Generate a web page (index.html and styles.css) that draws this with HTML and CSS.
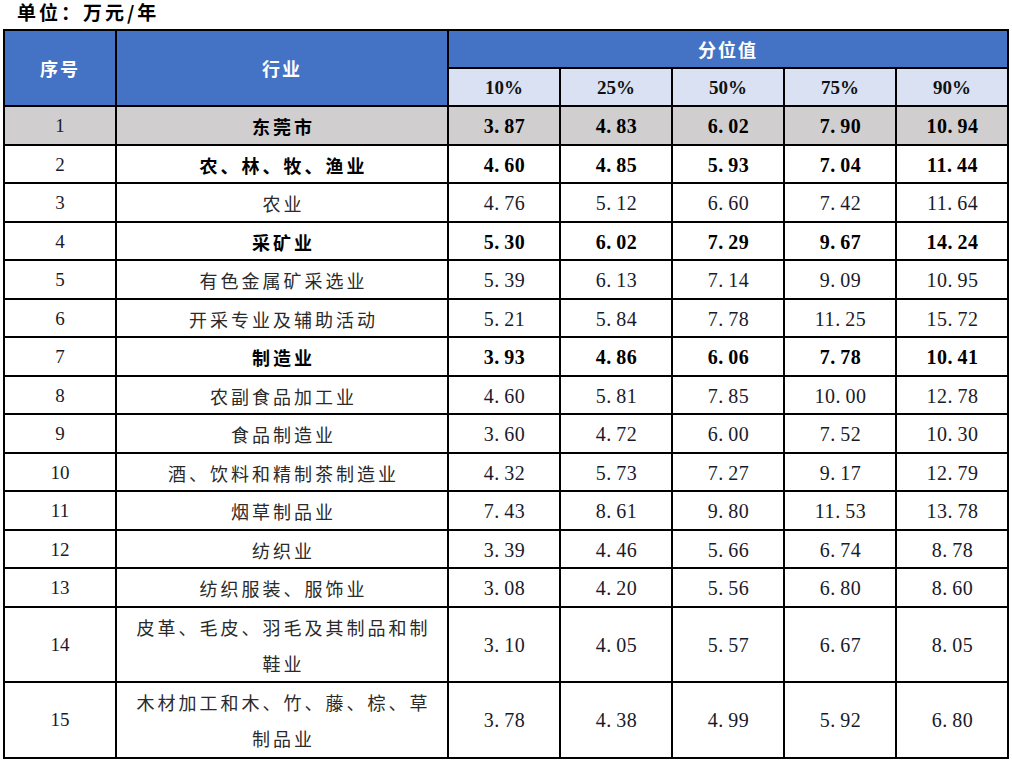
FILE: index.html
```html
<!DOCTYPE html>
<html lang="zh-CN">
<head>
<meta charset="utf-8">
<title>分位值</title>
<link rel="stylesheet" href="styles.css">
</head>
<body>
<div class="unit">单位：万元/年</div>
<table class="grid">
  <colgroup>
    <col class="c-no"><col class="c-ind"><col class="c-v"><col class="c-v"><col class="c-v"><col class="c-v"><col class="c-v">
  </colgroup>
  <thead>
    <tr class="h1">
      <th rowspan="2" class="hd">序号</th>
      <th rowspan="2" class="hd">行业</th>
      <th colspan="5" class="hd">分位值</th>
    </tr>
    <tr class="h2">
      <th class="sub">10%</th><th class="sub">25%</th><th class="sub">50%</th><th class="sub">75%</th><th class="sub">90%</th>
    </tr>
  </thead>
  <tbody>
    <tr class="total strong">
      <td class="no">1</td><td class="ind">东莞市</td>
      <td class="num">3<span class="pt">.</span>87</td><td class="num">4<span class="pt">.</span>83</td><td class="num">6<span class="pt">.</span>02</td><td class="num">7<span class="pt">.</span>90</td><td class="num">10<span class="pt">.</span>94</td>
    </tr>
    <tr class="strong">
      <td class="no">2</td><td class="ind">农、林、牧、渔业</td>
      <td class="num">4<span class="pt">.</span>60</td><td class="num">4<span class="pt">.</span>85</td><td class="num">5<span class="pt">.</span>93</td><td class="num">7<span class="pt">.</span>04</td><td class="num">11<span class="pt">.</span>44</td>
    </tr>
    <tr>
      <td class="no">3</td><td class="ind">农业</td>
      <td class="num">4<span class="pt">.</span>76</td><td class="num">5<span class="pt">.</span>12</td><td class="num">6<span class="pt">.</span>60</td><td class="num">7<span class="pt">.</span>42</td><td class="num">11<span class="pt">.</span>64</td>
    </tr>
    <tr class="strong">
      <td class="no">4</td><td class="ind">采矿业</td>
      <td class="num">5<span class="pt">.</span>30</td><td class="num">6<span class="pt">.</span>02</td><td class="num">7<span class="pt">.</span>29</td><td class="num">9<span class="pt">.</span>67</td><td class="num">14<span class="pt">.</span>24</td>
    </tr>
    <tr>
      <td class="no">5</td><td class="ind">有色金属矿采选业</td>
      <td class="num">5<span class="pt">.</span>39</td><td class="num">6<span class="pt">.</span>13</td><td class="num">7<span class="pt">.</span>14</td><td class="num">9<span class="pt">.</span>09</td><td class="num">10<span class="pt">.</span>95</td>
    </tr>
    <tr>
      <td class="no">6</td><td class="ind">开采专业及辅助活动</td>
      <td class="num">5<span class="pt">.</span>21</td><td class="num">5<span class="pt">.</span>84</td><td class="num">7<span class="pt">.</span>78</td><td class="num">11<span class="pt">.</span>25</td><td class="num">15<span class="pt">.</span>72</td>
    </tr>
    <tr class="strong">
      <td class="no">7</td><td class="ind">制造业</td>
      <td class="num">3<span class="pt">.</span>93</td><td class="num">4<span class="pt">.</span>86</td><td class="num">6<span class="pt">.</span>06</td><td class="num">7<span class="pt">.</span>78</td><td class="num">10<span class="pt">.</span>41</td>
    </tr>
    <tr>
      <td class="no">8</td><td class="ind">农副食品加工业</td>
      <td class="num">4<span class="pt">.</span>60</td><td class="num">5<span class="pt">.</span>81</td><td class="num">7<span class="pt">.</span>85</td><td class="num">10<span class="pt">.</span>00</td><td class="num">12<span class="pt">.</span>78</td>
    </tr>
    <tr>
      <td class="no">9</td><td class="ind">食品制造业</td>
      <td class="num">3<span class="pt">.</span>60</td><td class="num">4<span class="pt">.</span>72</td><td class="num">6<span class="pt">.</span>00</td><td class="num">7<span class="pt">.</span>52</td><td class="num">10<span class="pt">.</span>30</td>
    </tr>
    <tr>
      <td class="no">10</td><td class="ind">酒、饮料和精制茶制造业</td>
      <td class="num">4<span class="pt">.</span>32</td><td class="num">5<span class="pt">.</span>73</td><td class="num">7<span class="pt">.</span>27</td><td class="num">9<span class="pt">.</span>17</td><td class="num">12<span class="pt">.</span>79</td>
    </tr>
    <tr>
      <td class="no">11</td><td class="ind">烟草制品业</td>
      <td class="num">7<span class="pt">.</span>43</td><td class="num">8<span class="pt">.</span>61</td><td class="num">9<span class="pt">.</span>80</td><td class="num">11<span class="pt">.</span>53</td><td class="num">13<span class="pt">.</span>78</td>
    </tr>
    <tr>
      <td class="no">12</td><td class="ind">纺织业</td>
      <td class="num">3<span class="pt">.</span>39</td><td class="num">4<span class="pt">.</span>46</td><td class="num">5<span class="pt">.</span>66</td><td class="num">6<span class="pt">.</span>74</td><td class="num">8<span class="pt">.</span>78</td>
    </tr>
    <tr>
      <td class="no">13</td><td class="ind">纺织服装、服饰业</td>
      <td class="num">3<span class="pt">.</span>08</td><td class="num">4<span class="pt">.</span>20</td><td class="num">5<span class="pt">.</span>56</td><td class="num">6<span class="pt">.</span>80</td><td class="num">8<span class="pt">.</span>60</td>
    </tr>
    <tr class="two">
      <td class="no">14</td><td class="ind">皮革、毛皮、羽毛及其制品和制鞋业</td>
      <td class="num">3<span class="pt">.</span>10</td><td class="num">4<span class="pt">.</span>05</td><td class="num">5<span class="pt">.</span>57</td><td class="num">6<span class="pt">.</span>67</td><td class="num">8<span class="pt">.</span>05</td>
    </tr>
    <tr class="two">
      <td class="no">15</td><td class="ind">木材加工和木、竹、藤、棕、草制品业</td>
      <td class="num">3<span class="pt">.</span>78</td><td class="num">4<span class="pt">.</span>38</td><td class="num">4<span class="pt">.</span>99</td><td class="num">5<span class="pt">.</span>92</td><td class="num">6<span class="pt">.</span>80</td>
    </tr>
  </tbody>
</table>
</body>
</html>
```

FILE: styles.css
```css
html, body {
  margin: 0;
  padding: 0;
  background: #ffffff;
}

body {
  font-family: "Liberation Serif", "Noto Sans CJK SC", serif;
  color: #1c1c1c;
}

.unit {
  height: 24px;
  line-height: 24px;
  margin-bottom: 5px;
  padding-left: 17px;
  font-family: "Noto Sans CJK SC", sans-serif;
  font-size: 19px;
  font-weight: 700;
  letter-spacing: 3px;
  color: #000;
}

.grid {
  margin-left: 3px;
  width: 1006px;
  table-layout: fixed;
  border-collapse: separate;
  border-spacing: 0;
  border-top: 2px solid #000;
  border-left: 2px solid #000;
}

.c-no { width: 112px; }
.c-ind { width: 332px; }
.c-v { width: 112px; }

.grid th,
.grid td {
  box-sizing: border-box;
  padding: 0;
  border-right: 2px solid #000;
  border-bottom: 2px solid #000;
  text-align: center;
  vertical-align: middle;
}

.h1 th, .h2 th {
  height: 38px;
  line-height: 34px;
}

.hd {
  background: #4472c4;
  color: #ffffff;
  font-family: "Noto Sans CJK SC", sans-serif;
  font-size: 18px;
  font-weight: 700;
  letter-spacing: 2px;
  padding-left: 2px;
}

.sub {
  background: #d9e1f2;
  color: #111;
  font-family: "Liberation Serif", serif;
  font-size: 19px;
  font-weight: 700;
  padding-top: 1px !important;
}

.grid td {
  height: 38.5px;
  line-height: 34px;
  padding-top: 2px;
}

.no {
  font-family: "Liberation Serif", serif;
  font-size: 19px;
  color: #1a1a2a;
}

.ind {
  font-family: "Noto Sans CJK SC", sans-serif;
  font-size: 18px;
  font-weight: 400;
  letter-spacing: 3px;
  padding: 2px 14px 0 17px !important;
  color: #2a2a2a;
}

.num {
  font-family: "Liberation Serif", serif;
  font-size: 20px;
  letter-spacing: 0.5px;
  color: #1a1a2a;
  padding-left: 1px !important;
}

.pt {
  display: inline-block;
  width: 0.5em;
  text-align: left;
}

.strong .ind {
  font-weight: 700;
  color: #000;
}

.strong .num {
  font-weight: 700;
  color: #000;
}

.total td {
  background: #d0cece;
}

.two td {
  height: 75.5px;
  line-height: 36px;
  padding-top: 1px;
}

.two .ind {
  padding-top: 1px !important;
}
```
